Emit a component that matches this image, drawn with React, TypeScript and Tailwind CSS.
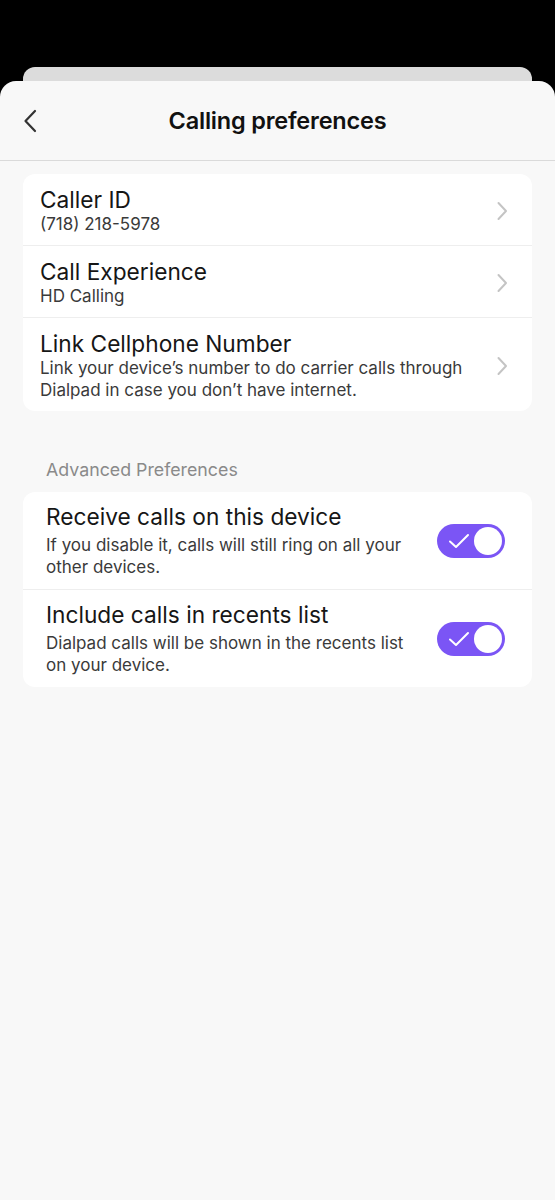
import React from 'react';

const navRows = [
  { title: 'Caller ID', sub: ['(718) 218-5978'] },
  { title: 'Call Experience', sub: ['HD Calling'] },
  {
    title: 'Link Cellphone Number',
    sub: ['Link your device\u2019s number to do carrier calls through', 'Dialpad in case you don\u2019t have internet.'],
  },
];

const toggleRows = [
  {
    title: 'Receive calls on this device',
    sub: ['If you disable it, calls will still ring on all your', 'other devices.'],
  },
  {
    title: 'Include calls in recents list',
    sub: ['Dialpad calls will be shown in the recents list', 'on your device.'],
  },
];

function Chevron() {
  return (
    <svg width="12" height="20" viewBox="0 0 12 20" fill="none" className="shrink-0">
      <path d="M2.5 2 L10 10 L2.5 18" stroke="#c4c4c4" strokeWidth="2" strokeLinecap="round" strokeLinejoin="round" />
    </svg>
  );
}

function Toggle() {
  return (
    <div className="relative w-[68px] h-[34px] rounded-full bg-[#7b55f5] shrink-0 flex items-center">
      <svg width="22" height="16" viewBox="0 0 22 16" fill="none" className="ml-[11px]">
        <path d="M2 8.5 L8 14 L20 2" stroke="#ffffff" strokeWidth="2" strokeLinecap="round" strokeLinejoin="round" />
      </svg>
      <div className="absolute right-[3px] top-[3px] w-[28px] h-[28px] rounded-full bg-white" />
    </div>
  );
}

export default function App() {
  return (
    <div className="w-full min-h-[1200px] bg-black pt-[67px] font-['Inter',sans-serif]">
      {/* sheet behind */}
      <div className="mx-[23px] h-[14px] rounded-t-[12px] bg-[#dcdcdc]" />

      {/* front sheet */}
      <div className="min-h-[1119px] rounded-t-[16px] bg-[#f8f8f8]">
        <div className="relative h-[80px] flex items-center justify-center border-b border-[#dadada]">
          <svg width="14" height="24" viewBox="0 0 14 24" fill="none" className="absolute left-[23px] top-[28px]">
            <path d="M12 2 L2.5 12 L12 22" stroke="#333333" strokeWidth="2.2" strokeLinecap="round" strokeLinejoin="round" />
          </svg>
          <h1 className="text-[23.5px] font-semibold text-[#111111] tracking-[-0.2px]">Calling preferences</h1>
        </div>

        <div className="px-[23px] pt-[13px]">
          <div className="bg-white rounded-[12px] overflow-hidden">
            {navRows.map((row, i) => (
              <div
                key={row.title}
                className={`flex items-center pl-[17px] pr-[24px] pt-[13px] pb-[10px] ${i > 0 ? 'border-t border-[#eeeeee]' : ''}`}
              >
                <div className="flex-1">
                  <div className="text-[22.7px] leading-[26px] text-[#161616]">{row.title}</div>
                  {row.sub.map((s) => (
                    <div key={s} className="text-[17px] leading-[22px] text-[#3a3a3a]">{s}</div>
                  ))}
                </div>
                <Chevron />
              </div>
            ))}
          </div>

          <div className="mt-[48px] pl-[23px] text-[17.8px] leading-[22px] text-[#8a8a8a]">Advanced Preferences</div>

          <div className="mt-[11px] bg-white rounded-[12px] overflow-hidden">
            {toggleRows.map((row, i) => (
              <div
                key={row.title}
                className={`flex items-center pl-[23px] pr-[27px] pt-[12px] pb-[11px] ${i > 0 ? 'border-t border-[#eeeeee]' : ''}`}
              >
                <div className="flex-1">
                  <div className="text-[22.7px] leading-[26px] text-[#161616] mb-[4px]">{row.title}</div>
                  {row.sub.map((s) => (
                    <div key={s} className="text-[17px] leading-[22px] text-[#3a3a3a]">{s}</div>
                  ))}
                </div>
                <Toggle />
              </div>
            ))}
          </div>
        </div>
      </div>
    </div>
  );
}
